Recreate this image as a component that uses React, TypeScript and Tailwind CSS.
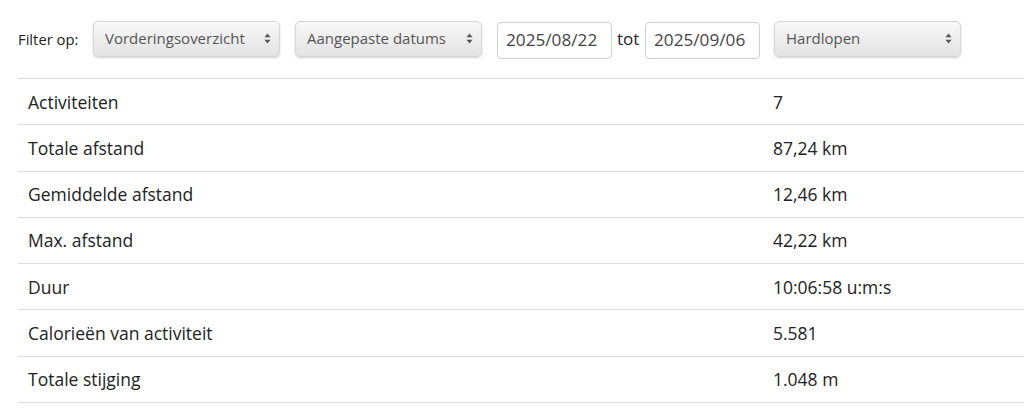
import React from 'react'

type Row = { label: string; value: string }

const rows: Row[] = [
  { label: 'Activiteiten', value: '7' },
  { label: 'Totale afstand', value: '87,24 km' },
  { label: 'Gemiddelde afstand', value: '12,46 km' },
  { label: 'Max. afstand', value: '42,22 km' },
  { label: 'Duur', value: '10:06:58 u:m:s' },
  { label: 'Calorieën van activiteit', value: '5.581' },
  { label: 'Totale stijging', value: '1.048 m' },
]

function Arrows() {
  return (
    <svg width="7" height="11" viewBox="0 0 7 11" className="shrink-0">
      <path d="M3.5 0.5 L6.5 4.3 L0.5 4.3 Z" fill="#555" />
      <path d="M3.5 10.5 L6.5 6.7 L0.5 6.7 Z" fill="#555" />
    </svg>
  )
}

function FakeSelect({ text }: { text: string }) {
  return (
    <div className="w-[187px] h-[36px] flex items-center justify-between pl-[11px] pr-[8px] rounded-[5px] border border-[#d6d6d6] bg-gradient-to-b from-[#f8f8f8] to-[#e3e3e3] shadow-[0_1px_2px_rgba(0,0,0,0.18)] text-[15px] text-[#555]">
      <span>{text}</span>
      <Arrows />
    </div>
  )
}

function DateBox({ text }: { text: string }) {
  return (
    <div className="w-[115px] h-[37px] flex items-center pl-[8px] rounded-[4px] border border-[#cfcfcf] bg-white text-[17.2px] text-[#444]">
      {text}
    </div>
  )
}

export default function App() {
  return (
    <div className="w-[1024px] h-[410px] bg-white overflow-hidden font-['Open_Sans',sans-serif] text-[#222]">
      <div className="flex items-center h-[78px] pl-[18px] pb-[1px]">
        <span className="w-[75px] text-[14.8px] mt-[2px]">Filter op:</span>
        <FakeSelect text="Vorderingsoverzicht" />
        <div className="w-[15px]" />
        <FakeSelect text="Aangepaste datums" />
        <div className="w-[15px]" />
        <div className="mt-[3px]">
          <DateBox text="2025/08/22" />
        </div>
        <span className="w-[33px] pl-[5px] text-[17px]">tot</span>
        <div className="mt-[3px]">
          <DateBox text="2025/09/06" />
        </div>
        <div className="w-[14px]" />
        <FakeSelect text="Hardlopen" />
      </div>
      <div className="ml-[18px] border-t border-[#ddd]">
        {rows.map(r => (
          <div key={r.label} className="flex items-center h-[46.3px] border-b border-[#ddd] text-[17.5px]">
            <div className="w-[745px] pl-[10px]">{r.label}</div>
            <div className="pl-[10px]">{r.value}</div>
          </div>
        ))}
      </div>
    </div>
  )
}
